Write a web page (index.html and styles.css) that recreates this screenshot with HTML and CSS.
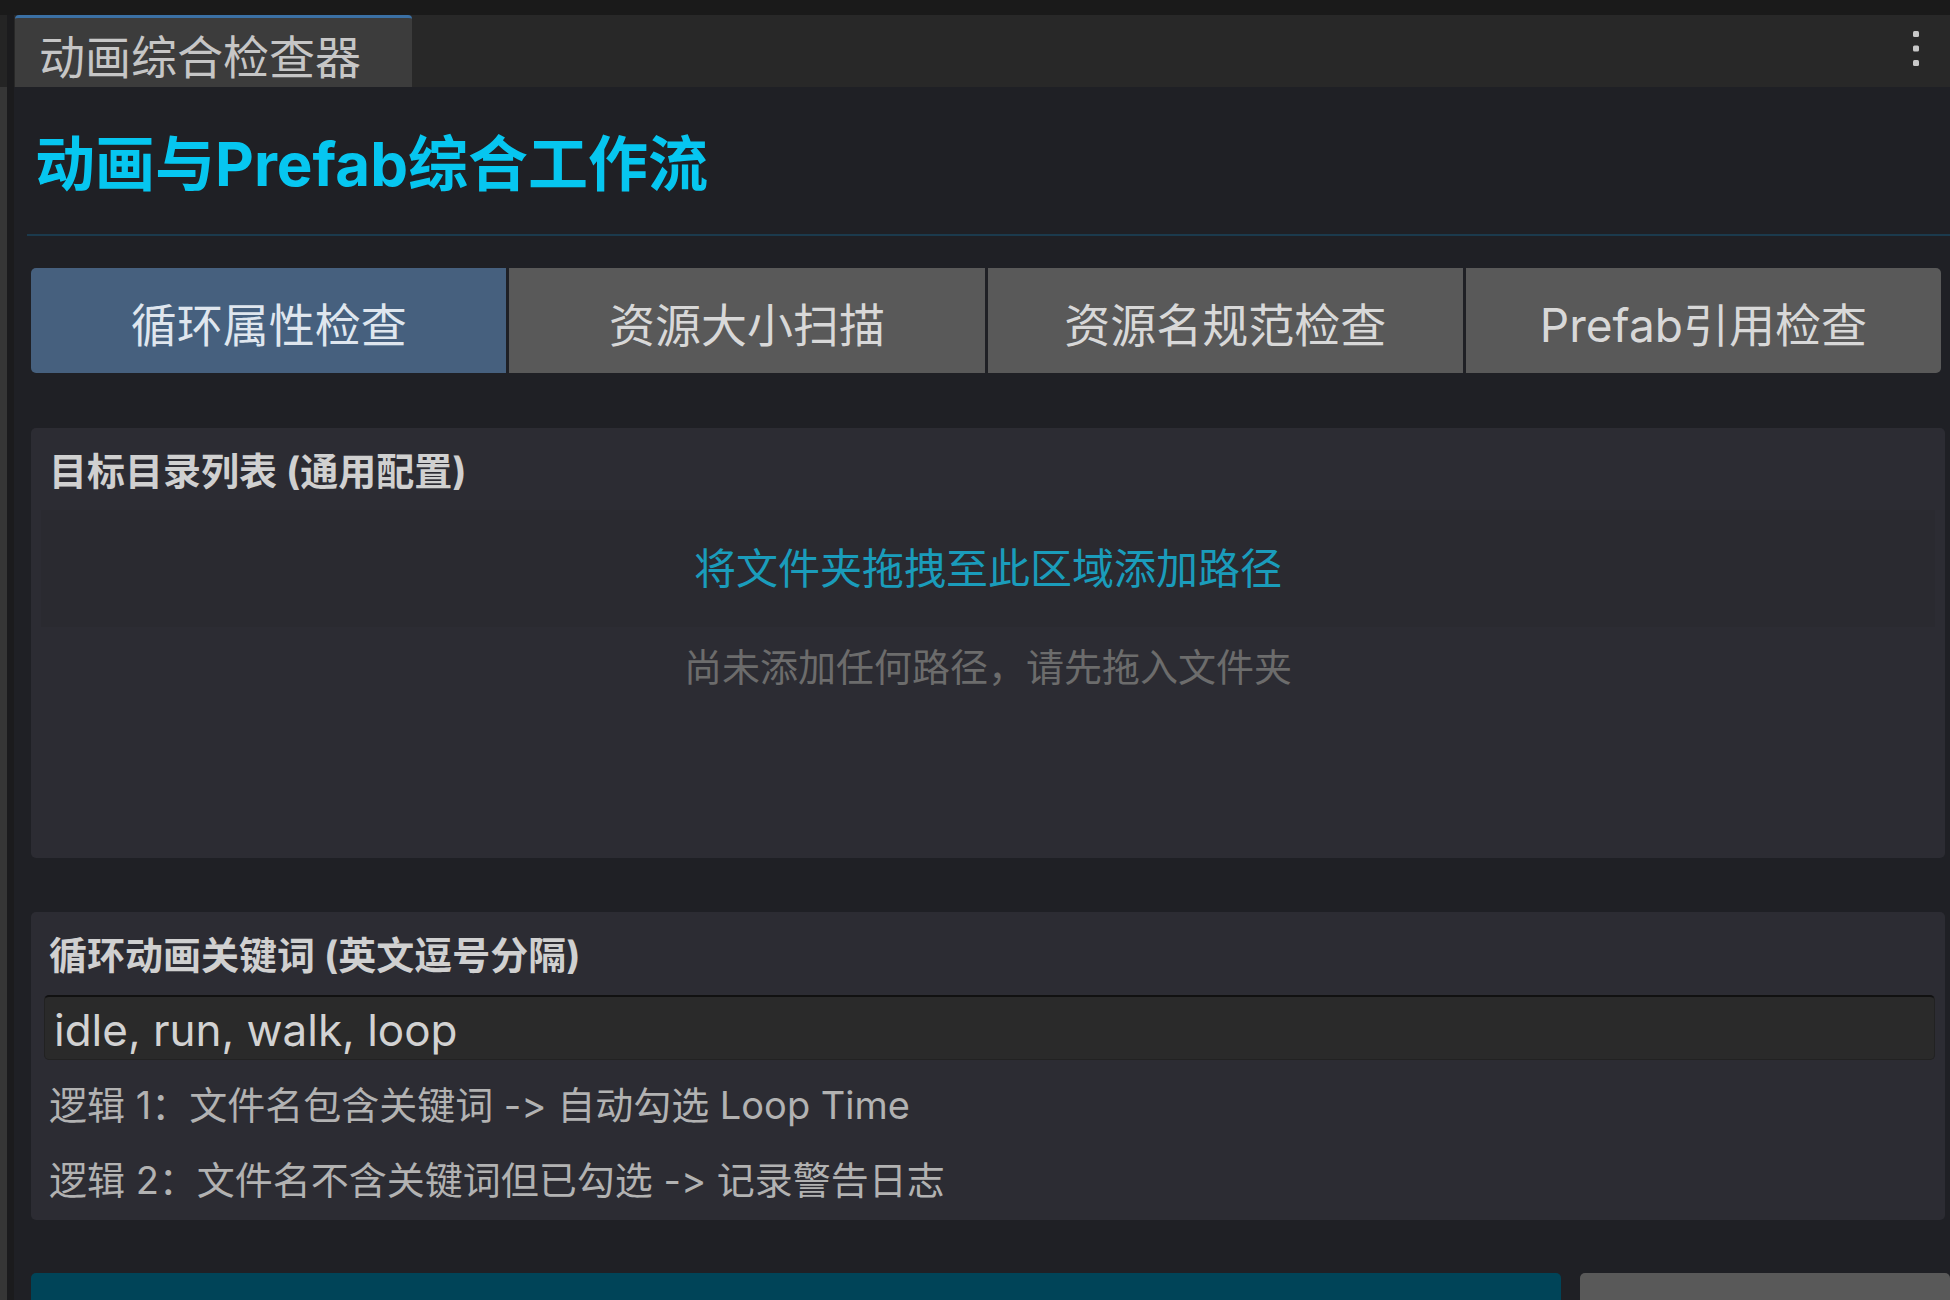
FILE: index.html
```html
<!DOCTYPE html>
<html lang="zh-CN">
<head>
  <meta charset="UTF-8" />
  <title>动画综合检查器</title>
  <link rel="stylesheet" href="styles.css">
</head>
<body>

<div class="dock">
  <!-- 左侧相邻面板的边缘 -->
  <div class="dock-edge"></div>
  <div class="dock-split"></div>

  <div class="window">
    <div class="tab-bar">
      <div class="tab">动画综合检查器</div>
      <svg class="menu-dots" width="6" height="35" viewBox="0 0 6 35">
        <rect x="0" y="0" width="6" height="6" rx="1.5" />
        <rect x="0" y="14.5" width="6" height="6" rx="1.5" />
        <rect x="0" y="29" width="6" height="6" rx="1.5" />
      </svg>
    </div>

    <div class="content">
      <h1 class="title">动画与Prefab综合工作流</h1>
      <div class="divider"></div>

      <div class="mode-tabs">
        <button class="mode active">循环属性检查</button>
        <button class="mode">资源大小扫描</button>
        <button class="mode">资源名规范检查</button>
        <button class="mode">Prefab引用检查</button>
      </div>

      <section class="panel folders">
        <div class="panel-label">目标目录列表 (通用配置)</div>
        <div class="drop-zone">将文件夹拖拽至此区域添加路径</div>
        <div class="empty-tip">尚未添加任何路径，请先拖入文件夹</div>
      </section>

      <section class="panel keywords">
        <div class="panel-label">循环动画关键词 (英文逗号分隔)</div>
        <input class="text-field" type="text" value="idle, run, walk, loop" />
        <div class="hint">逻辑 1：文件名包含关键词 -&gt; 自动勾选 Loop Time</div>
        <div class="hint">逻辑 2：文件名不含关键词但已勾选 -&gt; 记录警告日志</div>
      </section>

      <div class="actions">
        <button class="run-btn"></button>
        <button class="clear-btn"></button>
      </div>
    </div>
  </div>
</div>

</body>
</html>
```

FILE: styles.css
```css
html, body {
  margin: 0;
  padding: 0;
  height: 1300px;
  overflow: hidden;
  background: #1a1a1a;
  font-family: "Inter", "Noto Sans CJK SC", sans-serif;
  /* 不要把 -> 连成箭头 */
  font-feature-settings: "calt" 0, "liga" 0;
}

.dock {
  display: flex;
  height: 1285px;
  margin-top: 15px;
}

.dock-edge {
  width: 7px;
  background: linear-gradient(#242424 0 72px, #363636 72px);
}

.dock-split {
  width: 7px;
  background: #1b1b1d;
}

.window {
  flex: 1;
  display: flex;
  flex-direction: column;
  min-width: 0;
}

/* 窗口标签栏 */
.tab-bar {
  height: 72px;
  background: #282828;
  display: flex;
  justify-content: space-between;
}

.tab {
  width: 397px;
  margin-left: 1px;
  box-sizing: border-box;
  background: #3c3c3c;
  border-top: 3px solid #3b70a4;
  border-radius: 4px 4px 0 0;
  padding: 10px 0 0 24px;
  font-size: 46px;
  line-height: 59px;
  color: #c6c6c6;
}

.menu-dots {
  fill: #c8c8c8;
  margin: 16px 31px 0 0;
}

.content {
  flex: 1;
  background: #1f2025;
  padding: 37px 5px 0 17px;
}

.title {
  margin: 0;
  padding-left: 4px;
  font-size: 60px;
  line-height: 80px;
  font-weight: bold;
  color: #06c6f0;
}

.divider {
  height: 2px;
  margin: 30px -5px 0 -4px;
  background: #1b3a4d;
}

/* 功能切换按钮 */
.mode-tabs {
  display: flex;
  gap: 3px;
  margin: 32px 4px 0 0;
  border-radius: 5px;
  overflow: hidden;
}

.mode {
  flex: 1;
  height: 105px;
  padding: 9px 0 0;
  border: none;
  background: #595959;
  color: #d8d8d8;
  font-family: inherit;
  font-feature-settings: inherit;
  font-size: 46px;
  line-height: 96px;
}

.mode.active {
  background: #46607e;
  color: #dfe6ee;
}

.panel {
  background: #2c2c33;
  border-radius: 5px;
  padding: 19px 10px 0;
  box-sizing: border-box;
}

.panel-label {
  padding-left: 8px;
  font-size: 38px;
  line-height: 48px;
  font-weight: bold;
  color: #d0d0d0;
}

.folders {
  margin-top: 55px;
  min-height: 430px;
}

.drop-zone {
  margin-top: 15px;
  height: 117px;
  line-height: 117px;
  text-align: center;
  background: #2a2a30;
  font-size: 42px;
  color: #1a9cbb;
}

.empty-tip {
  margin-top: 16px;
  text-align: center;
  font-size: 38px;
  line-height: 48px;
  color: #6c6c6c;
}

.keywords {
  margin-top: 54px;
  height: 308px;
}

.text-field {
  display: block;
  width: calc(100% - 3px);
  height: 65px;
  margin: 16px 0 0 3px;
  box-sizing: border-box;
  padding: 3px 9px 0;
  background: #2a2a2a;
  border: 1px solid #222;
  border-top: 2px solid #111;
  border-radius: 5px;
  font-family: inherit;
  font-size: 44px;
  color: #d2d2d2;
  outline: none;
}

.hint {
  padding-left: 8px;
  font-size: 38px;
  line-height: 75px;
  color: #b2b2b2;
}

.keywords .text-field + .hint {
  margin-top: 8px;
}

/* 底部操作按钮 */
.actions {
  display: flex;
  gap: 19px;
  margin: 53px -5px 0 0;
}

.actions button {
  height: 100px;
  border: none;
  border-radius: 5px;
}

.run-btn {
  flex: 1;
  background: #004458;
}

.clear-btn {
  width: 370px;
  background: #595959;
}
```
